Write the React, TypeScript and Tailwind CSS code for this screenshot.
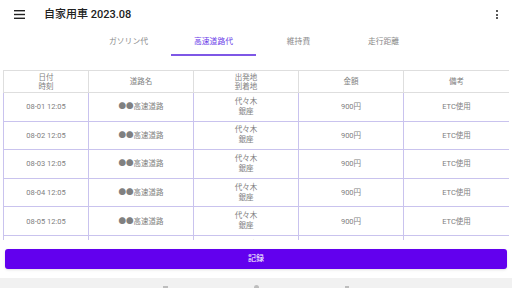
import React, { useState } from 'react';

interface Row {
  id: string;
  date: string;
  road: string;
  from: string;
  to: string;
  amount: string;
  note: string;
}

const tabs = ['ガソリン代', '高速道路代', '維持費', '走行距離'];

const rows: Row[] = ['01', '02', '03', '04', '05', '06'].map((d) => ({
  id: d,
  date: `08-${d} 12:05`,
  road: '●●高速道路',
  from: '代々木',
  to: '銀座',
  amount: '900円',
  note: 'ETC使用',
}));

export default function App() {
  const [active, setActive] = useState(1);

  return (
    <div className="w-[512px] h-[288px] bg-white flex flex-col overflow-hidden font-['Roboto','Noto_Sans_CJK_JP',sans-serif]">
      {/* App bar */}
      <div className="h-[29px] shrink-0 flex items-center pl-[14px] pr-[14px]">
        <svg width="11" height="9" viewBox="0 0 11 9" className="text-[#212121]">
          <rect x="0" y="0" width="11" height="1.4" fill="currentColor" />
          <rect x="0" y="3.8" width="11" height="1.4" fill="currentColor" />
          <rect x="0" y="7.6" width="11" height="1.4" fill="currentColor" />
        </svg>
        <h1 className="ml-[19px] text-[11px] font-medium text-[#212121] leading-none">自家用車 2023.08</h1>
        <div className="ml-auto flex flex-col gap-[1.5px] items-center">
          <span className="w-[2px] h-[2px] rounded-full bg-[#212121]" />
          <span className="w-[2px] h-[2px] rounded-full bg-[#212121]" />
          <span className="w-[2px] h-[2px] rounded-full bg-[#212121]" />
        </div>
      </div>

      {/* Tabs */}
      <div className="h-[27px] shrink-0 flex justify-center">
        {tabs.map((t, i) => (
          <button
            key={t}
            onClick={() => setActive(i)}
            className={`w-[85px] flex items-center justify-center text-[7.8px] border-b-[2px] ${
              i === active ? 'text-[#6a3de8] border-[#7e57e6]' : 'text-[#8a8a8a] border-transparent'
            }`}
          >
            {t}
          </button>
        ))}
      </div>

      {/* Table */}
      <div className="mt-[14px] mx-[3px] h-[170px] shrink-0 overflow-hidden">
        <table className="w-[506px] border-collapse table-fixed text-[7.5px] text-[#808080]">
          <colgroup>
            <col className="w-[85px]" />
            <col className="w-[105px]" />
            <col className="w-[105px]" />
            <col className="w-[105px]" />
            <col className="w-[106px]" />
          </colgroup>
          <thead>
            <tr className="h-[22px]">
              <th className="font-normal border border-[#dedede] leading-[9px]">日付<br />時刻</th>
              <th className="font-normal border border-[#dedede]">道路名</th>
              <th className="font-normal border border-[#dedede] leading-[9px]">出発地<br />到着地</th>
              <th className="font-normal border border-[#dedede]">金額</th>
              <th className="font-normal border border-[#dedede]">備考</th>
            </tr>
          </thead>
          <tbody>
            {rows.map((r) => (
              <tr key={r.id} className="h-[28.6px]">
                <td className="border border-[#c9c3ee] text-center">{r.date}</td>
                <td className="border border-[#c9c3ee] text-center">{r.road}</td>
                <td className="border border-[#c9c3ee] text-center leading-[10px]">{r.from}<br />{r.to}</td>
                <td className="border border-[#c9c3ee] text-center">{r.amount}</td>
                <td className="border border-[#c9c3ee] text-center">{r.note}</td>
              </tr>
            ))}
          </tbody>
        </table>
      </div>

      {/* Record button */}
      <div className="mt-[9px] px-[5px] flex">
        <button className="flex-1 h-[20px] rounded-[3px] bg-[#6200ee] text-white text-[8px] leading-none shadow-sm">記録</button>
      </div>

      {/* System nav bar */}
      <div className="mt-auto h-[10px] bg-[#f1f1f1] flex items-end justify-around px-[120px]">
        <span className="w-[5px] h-[2px] bg-[#bdbdbd]" />
        <span className="w-[5px] h-[3px] rounded-t-full bg-[#bdbdbd]" />
        <span className="w-[4px] h-[2px] bg-[#bdbdbd]" />
      </div>
    </div>
  );
}
